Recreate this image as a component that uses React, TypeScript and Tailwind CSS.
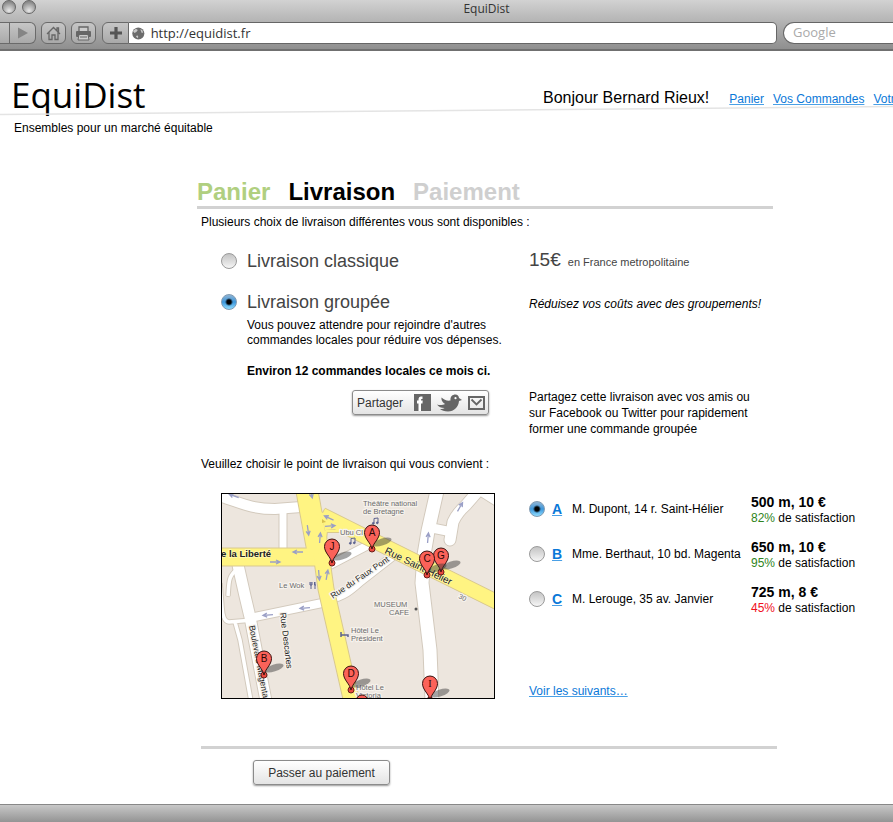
import { useState } from "react";
import type { ReactNode } from "react";

const RADIO =
  "size-4 shrink-0 appearance-none rounded-full border border-[#9a9a9a] bg-linear-to-b from-[#c4c4c4] via-[#dcdcdc] to-[#f6f6f6] checked:border-[#7f9ab2] checked:bg-[radial-gradient(circle_at_50%_50%,#000_2px,transparent_4px),linear-gradient(to_bottom,#8fb4d4,#3c97dc_50%,#8fdcff)]";
const LINK = "text-[#0a78d8] underline decoration-[#4aa0e6] underline-offset-1 [text-decoration-skip-ink:none]";
const TOOL = "flex h-[22px] items-center justify-center border border-[#6a6a6a] bg-linear-to-b from-[#c6c6c6] to-[#a9a9a9] text-[#666]";
const PUSH =
  "rounded-[3px] border border-[#8b8b8b] bg-linear-to-b from-white to-[#e4e4e4] text-[#333] shadow-[0_1px_2px_#999]";

function BrowserChrome() {
  return (
    <header className="overflow-hidden border-b-2 border-[#707070] bg-linear-to-b from-[#d2d2d2] to-[#8f8f8f] font-['Open_Sans',sans-serif]">
      <div className="flex h-[22px] items-start pl-[2px]">
        <div className="flex gap-[6px]">
          {["Réduire", "Agrandir"].map((name) => (
            <button
              key={name}
              aria-label={name}
              className="size-[14px] rounded-full border border-[#666] bg-[radial-gradient(circle_at_50%_80%,#e8e8e8,#8b8b8b_75%)]"
            />
          ))}
        </div>
        <p className="flex-1 pl-[44px] text-center text-[12px] leading-[18px] text-[#333]">EquiDist</p>
      </div>
      <div className="flex h-[27px] items-start">
        <button aria-label="Page précédente" className={`${TOOL} w-[10px] border-l-0`} />
        <button aria-label="Page suivante" className={`${TOOL} mr-[5px] w-[26px] rounded-r-[6px] border-l-0`}>
          <svg width="10" height="12" viewBox="0 0 10 12">
            <path d="M0 0.500L10 6L0 11.500Z" fill="#858585" />
          </svg>
        </button>
        <button aria-label="Accueil" className={`${TOOL} mr-[5px] w-[25px] rounded-[6px]`}>
          <svg width="15" height="15" viewBox="0 0 15 15" fill="none" stroke="#666" strokeWidth="1.300">
            <path d="M1 8L7.500 1.500L14 8M3 6.500V13.500H6V9H9V13.500H12V6.500M11 4.500V2H12.500V6" />
          </svg>
        </button>
        <button aria-label="Imprimer" className={`${TOOL} mr-[6px] w-[25px] rounded-[6px]`}>
          <svg width="17" height="15" viewBox="0 0 17 15">
            <path d="M4 5V1H13V5" fill="#ccc" stroke="#666" strokeWidth="1.300" />
            <rect x="1" y="5" width="15" height="6" rx="1" fill="#666" />
            <path d="M4 8.500H13L14 14H3Z" fill="#ccc" stroke="#666" />
            <path d="M5 11H12M5 6.500H12" stroke="#666" />
          </svg>
        </button>
        <button aria-label="Ajouter un signet" className={`${TOOL} w-[27px] rounded-l-[6px]`}>
          <svg width="12" height="12" viewBox="0 0 12 12">
            <path d="M6 0V12M0 6H12" stroke="#555" strokeWidth="3.200" />
          </svg>
        </button>
        <div className="flex h-[22px] flex-1 items-center gap-[6px] rounded-r-[5px] border border-l-0 border-[#666] bg-white pl-[3px]">
          <svg width="13" height="13" viewBox="0 0 13 13">
            <circle cx="6.500" cy="6.500" r="6.200" fill="#6c6c6c" />
            <path d="M1 4L4 1.500L6 3L4.500 5L2.500 6ZM8.500 2L10.500 3L11.500 5.500L10 6ZM4 9L6 8.500L6.500 10L5.500 11.500Z" fill="#c8c8c8" />
          </svg>
          <input aria-label="Adresse" defaultValue="http://equidist.fr" className="w-full pb-px text-[13px] leading-4 text-[#333] outline-none" />
        </div>
        <input
          aria-label="Recherche"
          placeholder="Google"
          className="ml-[6px] h-[22px] w-[110px] rounded-l-full border border-r-0 border-[#666] bg-white pb-[2px] pl-[9px] text-[13px] outline-none placeholder:text-[#aaa]"
        />
      </div>
    </header>
  );
}

function Banner() {
  return (
    <div className="relative flex overflow-hidden whitespace-nowrap pt-[23px] pb-[42px]">
      <svg className="absolute top-[54px] left-0 h-[11px] w-full" viewBox="0 0 893 11" preserveAspectRatio="none">
        <path d="M0 9.500L893 1.500" stroke="#e4e4e4" strokeWidth="1.500" />
      </svg>
      <div className="w-[531px] shrink-0 pl-[11px]">
        <h1 className="font-['Open_Sans',sans-serif] text-[35px] leading-[42px]">EquiDist</h1>
        <p className="mt-1 pl-[3px]">Ensembles pour un marché équitable</p>
      </div>
      <div className="flex items-baseline pt-4 pl-3">
        <p className="mr-5 text-[16px]">Bonjour Bernard Rieux!</p>
        <nav className="flex gap-[9px]">
          <a href="#panier" className={LINK}>Panier</a>
          <a href="#commandes" className={LINK}>Vos Commandes</a>
          <a href="#compte" className={LINK}>Votre Compte</a>
        </nav>
      </div>
    </div>
  );
}

const PINS = [
  { id: "A", x: 151, y: 56 },
  { id: "J", x: 111, y: 70 },
  { id: "G", x: 220, y: 79 },
  { id: "C", x: 206, y: 82 },
  { id: "B", x: 43, y: 182 },
  { id: "D", x: 130, y: 197 },
  { id: "I", x: 209, y: 207 },
];

const ARROWS = [
  [13, 3, 200], [87, 37, 82], [99, 45, -85], [77, 59, 180], [54, 69, 0], [98, 82, 85], [106, 82, -80],
  [108, 25, 205], [109, 33, -5], [207, 45, -85], [239, 14, -60], [47, 122, 175], [84, 115, 175], [90, 0, 75],
];

function Halo({ children, ...rest }: { children: ReactNode; [key: string]: unknown }) {
  return (
    <text stroke="#f6f2ec" strokeWidth="2.500" paintOrder="stroke" strokeLinejoin="round" {...rest}>
      {children}
    </text>
  );
}

function DeliveryMap() {
  const white = (
    <>
      <path d="M-2 3C20 10 30 16 54 16L80 14" strokeWidth="10" />
      <path d="M62 16V58" strokeWidth="7" />
      <path d="M17 72L24 103L29 124L45 208" strokeWidth="11" />
      <path d="M29 125L106 109" strokeWidth="8" />
      <path d="M17 76C7 82 8 90 7 103M-1 90L1 114Q2 129 8 129L32 127M14 129L19 147L30 208" strokeWidth="3.500" />
      <path d="M109 72L155 48" strokeWidth="8" />
      <path d="M108 106C122 104 130 97 140 88L172 63" strokeWidth="8" />
      <path d="M216 -2L207 38L203 62L201 90L209 157L211 208" strokeWidth="13" />
      <path d="M211 35L231 39" strokeWidth="9" />
      <path d="M229 47L232 29Q236 20 245 12L258 -3" strokeWidth="11" strokeLinecap="round" />
      <path d="M255 -5L277 9" strokeWidth="9" />
    </>
  );
  const yellow = (
    <>
      <path d="M-2 64H104" strokeWidth="17" />
      <path d="M86 -2L98 64" strokeWidth="21" />
      <path d="M100 60L105 96L131 210" strokeWidth="15" />
      <path d="M101 22L129 36L276 109" strokeWidth="14" />
      <path d="M100 20L132 38L105 38L103 55Z" strokeWidth="2" />
    </>
  );
  return (
    <svg
      role="img"
      aria-label="Carte des points de livraison"
      className="block w-[274px] border border-black"
      viewBox="1 1 272 204"
      fontFamily="'Liberation Sans', Arial, sans-serif"
    >
      <rect width="274" height="206" fill="#ede6de" />
      <g fill="none" stroke="#d3cabd" strokeLinejoin="round">
        <g transform="translate(-1 0)">{white}</g>
        <g transform="translate(1 0)">{white}</g>
        <g transform="translate(0 -1)">{white}</g>
        <g transform="translate(0 1)">{white}</g>
      </g>
      <g fill="none" stroke="#fff" strokeLinejoin="round">{white}</g>
      <g fill="none" stroke="#d9c98f" strokeLinejoin="round">
        <g transform="translate(-1 0)">{yellow}</g>
        <g transform="translate(1 0)">{yellow}</g>
        <g transform="translate(0 -1)">{yellow}</g>
        <g transform="translate(0 1)">{yellow}</g>
      </g>
      <g fill="none" stroke="#fff482" strokeLinejoin="round">{yellow}</g>
      <path d="M101 21L127 35L104 37Z" fill="#fff482" />
      <path d="M101 26L105 29L101 30Z" fill="#d9c04f" />
      {ARROWS.map(([x, y, a]) => (
        <path
          key={`${x}-${y}`}
          transform={`translate(${x} ${y}) rotate(${a})`}
          d="M-5 0H4M1 -2L5 0L1 2"
          fill="none"
          stroke="#9a9fc6"
          strokeWidth="1.300"
        />
      ))}
      <g fontSize="7.500" fill="#6c6c6c">
        <Halo x="142" y="13">Théâtre national</Halo>
        <Halo x="142" y="21">de Bretagne</Halo>
        <Halo x="119" y="42">Ubu Cl</Halo>
        <Halo x="58" y="95">Le Wok</Halo>
        <Halo x="153" y="114">MUSEUM</Halo>
        <Halo x="168" y="122">CAFE</Halo>
        <Halo x="130" y="140">Hôtel Le</Halo>
        <Halo x="130" y="148">Président</Halo>
        <Halo x="135" y="197">Hôtel Le</Halo>
        <Halo x="135" y="205">Victoria</Halo>
        <Halo x="237" y="105" transform="rotate(25 237 105)" fontSize="7">30</Halo>
      </g>
      {["translate(151 25)", "translate(128 45)"].map((place) => (
        <g key={place} transform={place} fill="#5d6390" stroke="#5d6390">
          <path d="M2 5V0.500L6 0V4.500" fill="none" />
          <circle cx="1.300" cy="5.300" r="0.900" />
          <circle cx="5.300" cy="4.800" r="0.900" />
        </g>
      ))}
      <path d="M90 89V96M94 89V96M89 89V92H91V89M93.500 89V92H95" stroke="#5d6390" fill="none" />
      <path d="M120 139V144M120 142H127V144" stroke="#5d6390" fill="none" strokeWidth="1.500" />
      <circle cx="195" cy="116" r="1.500" fill="#555" />
      <g fill="#222">
        <text x="0" y="64" fontSize="9.500" fontWeight="bold" stroke="#fff9b8" strokeWidth="1.500" paintOrder="stroke">e la Liberté</text>
        <Halo fontSize="8.500" x="112" y="106" transform="rotate(-34 112 106)">Rue du Faux Pont</Halo>
        <Halo fontSize="8.500" x="28" y="133" transform="rotate(79 28 133)">Boulevard Magenta</Halo>
        <Halo fontSize="8.500" x="59" y="120" transform="rotate(83 59 120)">Rue Descartes</Halo>
        <text x="163" y="60" transform="rotate(26 163 60)" fontSize="10" stroke="#fff9b8" strokeWidth="1" paintOrder="stroke">
          Rue Saint-Hélier
        </text>
      </g>
      {PINS.map(({ id, x, y }) => (
        <g key={id} transform={`translate(${x} ${y})`}>
          <ellipse cx="10" cy="-7" rx="10" ry="3.500" transform="rotate(-18 10 -7)" fill="#333" opacity="0.450" />
          <circle r="3" fill="#e8493f" stroke="#6b1d18" />
          <path
            d="M0 0C-1 -6 -7.500 -10 -7.500 -16.500A7.500 7.500 0 0 1 7.500 -16.500C7.500 -10 1 -6 0 0Z"
            fill="#fb6259"
            stroke="#3a1210"
          />
          <text y="-13" fontSize="10" textAnchor="middle" fill="#2b0806" fontFamily={id === "I" ? "'Liberation Serif', serif" : undefined}>
            {id}
          </text>
        </g>
      ))}
      <circle cx="141" cy="208" r="6" fill="#fb6259" stroke="#3a1210" />
    </svg>
  );
}

const POINTS = [
  { id: "A", name: "M. Dupont, 14 r. Saint-Hélier", price: "500 m, 10 €", score: "82%", tone: "text-[#2f8420]" },
  { id: "B", name: "Mme. Berthaut, 10 bd. Magenta", price: "650 m, 10 €", score: "95%", tone: "text-[#2f8420]" },
  { id: "C", name: "M. Lerouge, 35 av. Janvier", price: "725 m, 8 €", score: "45%", tone: "text-[#f0101c]" },
];

function PointList() {
  const [point, setPoint] = useState("A");
  return (
    <div className="flex flex-col">
      <ul>
        {POINTS.map((p) => (
          <li key={p.id} className="grid h-[45px] grid-cols-[23px_20px_179px_auto] items-center whitespace-nowrap">
            <input
              type="radio"
              name="point"
              id={`point-${p.id}`}
              checked={point === p.id}
              onChange={() => setPoint(p.id)}
              className={RADIO}
            />
            <a href={`#${p.id}`} className={`${LINK} text-[14px] font-bold`}>{p.id}</a>
            <label htmlFor={`point-${p.id}`}>{p.name}</label>
            <div className="pt-[2px]">
              <p className="text-[14px] font-bold">{p.price}</p>
              <p><span className={p.tone}>{p.score}</span> de satisfaction</p>
            </div>
          </li>
        ))}
      </ul>
      <a href="#suivants" className={`${LINK} mt-auto self-start`}>Voir les suivants…</a>
    </div>
  );
}

function ShareBar() {
  return (
    <div className={`${PUSH} ml-[131px] mt-[11px] flex h-[25px] w-[137px] items-center pl-1`}>
      <span className="mr-[11px]">Partager</span>
      <button aria-label="Facebook" className="mr-[6px]">
        <svg width="17" height="17" viewBox="0 0 17 17">
          <rect width="17" height="17" fill="#666" />
          <path d="M4.500 17V9.500H3V6.500H4.500V5.500C4.500 3.500 5.500 2.500 7 2.500H8.500V5H8C7.400 5 7 5.300 7 6V6.500H8.700L8.500 9.500H7V17Z" fill="#fff" />
        </svg>
      </button>
      <button aria-label="Twitter" className="mr-[6px]">
        <svg width="25" height="18" viewBox="0 0 25 18" fill="#666">
          <path d="M0 10.500C3 11.500 6 11 8 10C5 8 4 5.500 4.500 3.500C7 6 10 7 13.500 6.500C13 2.500 15.500 0.500 18.500 0.500C20.500 0.500 21.800 2 22 4L25 6L22 7C21.500 13 17 17.500 11 17.500C7.500 17.500 4.500 16.500 3 15C5 15.200 6.500 14.800 7.500 14C4.500 14 1.500 13 0 10.500Z" />
          <circle cx="18.500" cy="4.200" r="1.100" fill="#fff" />
        </svg>
      </button>
      <button aria-label="Courriel">
        <svg width="17" height="14" viewBox="0 0 17 14" fill="none" stroke="#666" strokeWidth="2">
          <rect x="1" y="1" width="15" height="12" />
          <path d="M3.500 3.500L8.500 8.500L13.500 3.500" strokeWidth="1.800" />
        </svg>
      </button>
    </div>
  );
}

export default function App() {
  const [mode, setMode] = useState("groupee");
  return (
    <div className="flex min-h-screen flex-col overflow-x-hidden bg-white font-['Liberation_Sans',Arial,sans-serif] text-[12px] leading-4 text-black">
      <BrowserChrome />
      <Banner />
      <main className="pl-[197px]">
        <ol className="flex max-w-[576px] gap-[18px] border-b-3 border-[#d2d2d2] text-[24px] leading-[28px] font-bold">
          <li className="text-[#b0cf80]">Panier</li>
          <li aria-current="step">Livraison</li>
          <li className="text-[#cfcfcf]">Paiement</li>
        </ol>
        <form className="pl-1" onSubmit={(e) => e.preventDefault()}>
          <p className="mt-[5px]">Plusieurs choix de livraison différentes vous sont disponibles :</p>
          <div className="mt-[19px] grid grid-cols-[308px_1fr] pl-5">
            <div className="flex items-center gap-[10px] text-[18px] leading-[22px] text-[#444]">
              <input type="radio" name="mode" id="classique" checked={mode === "classique"} onChange={() => setMode("classique")} className={RADIO} />
              <label htmlFor="classique">Livraison classique</label>
            </div>
            <p className="text-[11px] leading-[22px] text-[#444]">
              <span className="mr-1 text-[19px]">15€</span> en France metropolitaine
            </p>
            <div className="mt-[18px] flex items-center gap-[10px] text-[18px] leading-[22px] text-[#444]">
              <input type="radio" name="mode" id="groupee" checked={mode === "groupee"} onChange={() => setMode("groupee")} className={RADIO} />
              <label htmlFor="groupee">Livraison groupée</label>
            </div>
            <p className="mt-[23px] italic">Réduisez vos coûts avec des groupements!</p>
            <div className="pb-[22px]">
              <p className="mt-[5px] w-[290px] pl-[26px] leading-[15px]">
                Vous pouvez attendre pour rejoindre d'autres commandes locales pour réduire vos dépenses.
              </p>
              <p className="mt-[15px] pl-[26px] font-bold">Environ 12 commandes locales ce mois ci.</p>
              <ShareBar />
            </div>
            <p className="w-[232px] self-end">
              Partagez cette livraison avec vos amis ou sur Facebook ou Twitter pour rapidement former une commande groupée
            </p>
          </div>
          <p className="mt-[19px]">Veuillez choisir le point de livraison qui vous convient :</p>
          <div className="mt-[14px] grid grid-cols-[308px_1fr] pl-5">
            <div className="pt-[7px]">
              <DeliveryMap />
            </div>
            <PointList />
          </div>
          <hr className="mt-[47px] max-w-[576px] border-t-3 border-[#d2d2d2]" />
          <button type="submit" className={`${PUSH} mt-[11px] ml-[52px] h-[25px] w-[137px]`}>Passer au paiement</button>
        </form>
      </main>
      <footer className="mt-auto h-[18px] border-t border-[#888] bg-linear-to-b from-[#c8c8c8] to-[#949494]" />
    </div>
  );
}
